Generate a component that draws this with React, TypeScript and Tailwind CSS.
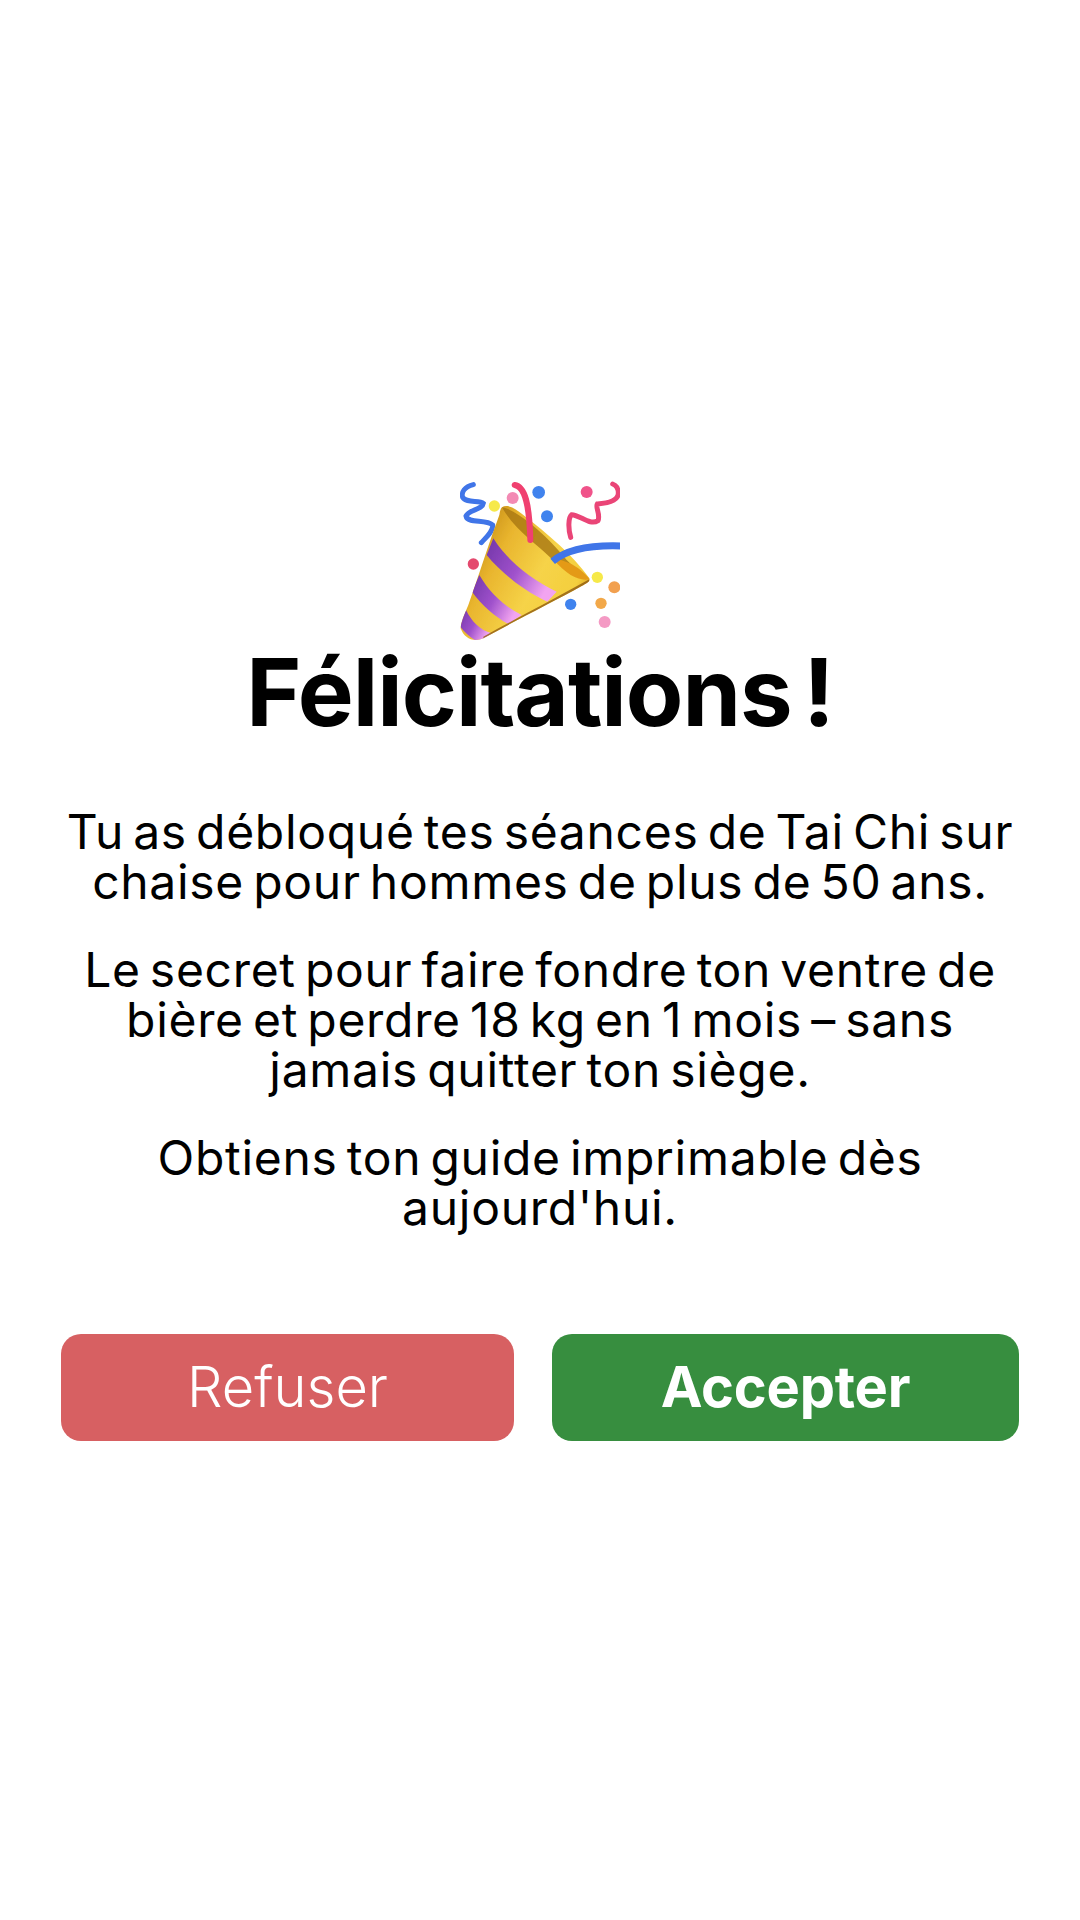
const PartyPopper = () => (
  <svg viewBox="60 60 480 480" className="w-[160px] h-[160px] shrink-0">
    <defs>
      <linearGradient id="cone" x1="0" y1="0.2" x2="1" y2="0.75">
        <stop offset="0" stopColor="#b9800f" />
        <stop offset="0.3" stopColor="#e9b52e" />
        <stop offset="0.6" stopColor="#f6d348" />
        <stop offset="0.85" stopColor="#f4cf3e" />
        <stop offset="1" stopColor="#c9860f" />
      </linearGradient>
      <linearGradient id="stripe" x1="0" y1="0" x2="1" y2="0.5">
        <stop offset="0" stopColor="#7235a8" />
        <stop offset="0.55" stopColor="#a052cc" />
        <stop offset="1" stopColor="#f2a4f0" />
      </linearGradient>
      <clipPath id="coneClip">
        <path d="M186 142 C200 132 222 142 250 165 C320 220 400 285 448 355 C452 364 440 370 425 378 C340 425 230 480 130 535 C100 548 72 535 62 505 C62 490 72 465 85 435 C115 350 150 240 178 165 C180 152 182 146 186 142 Z" />
      </clipPath>
      <filter id="soft" x="-5%" y="-5%" width="110%" height="110%">
        <feGaussianBlur stdDeviation="2" />
      </filter>
    </defs>

    <g filter="url(#soft)">
      <path d="M100 74 C75 80 62 96 68 112 C78 130 118 120 130 130 C128 148 85 150 78 168 C82 192 140 176 158 195 C160 215 135 235 124 248" fill="none" stroke="#3f74e8" strokeWidth="15" strokeLinecap="round" />

      <path d="M186 142 C200 132 222 142 250 165 C320 220 400 285 448 355 C452 364 440 370 425 378 C340 425 230 480 130 535 C100 548 72 535 62 505 C62 490 72 465 85 435 C115 350 150 240 178 165 C180 152 182 146 186 142 Z" fill="url(#cone)" />
      <g clipPath="url(#coneClip)">
        <path d="M160 235 C200 300 270 355 350 395 L322 425 C250 392 180 335 140 285 Z" fill="url(#stripe)" />
        <path d="M118 345 C150 400 195 440 245 465 L205 492 C165 470 125 435 96 395 Z" fill="url(#stripe)" />
        <path d="M78 450 C95 485 120 510 155 520 L120 548 C95 538 75 518 56 495 Z" fill="url(#stripe)" />
        <path d="M130 530 C230 475 340 418 448 358 L452 376 C340 438 230 492 130 550 Z" fill="#8f5a12" opacity="0.8" />
        <path d="M186 142 C235 150 330 235 380 300 C405 325 430 345 448 355 C415 342 360 322 330 292 C290 252 225 212 186 142 Z" fill="#a87712" opacity="0.8" />
        <path d="M340 298 C385 298 430 332 448 358 C420 364 382 348 340 298 Z" fill="#e49a18" />
      </g>

      <path d="M224 75 C255 80 268 130 271 240" fill="none" stroke="#f0406f" strokeWidth="18" strokeLinecap="round" />
      <path d="M338 304 C380 268 450 255 543 258" fill="none" stroke="#3f74e8" strokeWidth="21" />
      <path d="M392 232 C384 205 385 172 395 164 C420 165 450 198 474 182 C482 162 465 142 472 132 C500 130 535 125 535 100 C535 85 527 75 518 72" fill="none" stroke="#ea4577" strokeWidth="15" strokeLinecap="round" />

      <circle cx="163" cy="138" r="17" fill="#f6e94a" />
      <circle cx="218" cy="114" r="18" fill="#f38ab4" />
      <circle cx="296" cy="97" r="19" fill="#3f83ee" />
      <circle cx="321" cy="169" r="18" fill="#3f83ee" />
      <circle cx="440" cy="96" r="18" fill="#f0528a" />
      <circle cx="100" cy="312" r="17" fill="#e4496e" />
      <circle cx="472" cy="352" r="17" fill="#f6e94a" />
      <circle cx="523" cy="382" r="18" fill="#f2a050" />
      <circle cx="483" cy="430" r="17" fill="#f2a84a" />
      <circle cx="392" cy="433" r="17" fill="#3f83ee" />
      <circle cx="494" cy="486" r="18" fill="#f49ac4" />
    </g>
  </svg>
);

export default function App() {
  return (
    <div className="min-h-[1920px] bg-white flex flex-col items-center justify-center px-[61px] font-['Inter',sans-serif] text-black">
      <PartyPopper />
      <h1 className="text-[94px] leading-[100px] font-bold tracking-[-1px] [word-spacing:-10px] pt-[2px] mb-[65px]">Félicitations !</h1>
      <div className="flex flex-col gap-[38px] text-center text-[48px] leading-[50px] tracking-[0.7px] [word-spacing:-5px] font-[380]">
        <p>Tu as débloqué tes séances de Tai Chi sur<br />chaise pour hommes de plus de 50 ans.</p>
        <p>Le secret pour faire fondre ton ventre de<br />bière et perdre 18 kg en 1 mois – sans<br />jamais quitter ton siège.</p>
        <p>Obtiens ton guide imprimable dès<br />aujourd'hui.</p>
      </div>
      <div className="flex w-full gap-[38px] mt-[101px]">
        <button className="w-[453px] h-[107px] rounded-[20px] bg-[#d76062] text-white text-[56px] font-light">Refuser</button>
        <button className="w-[467px] h-[107px] rounded-[20px] bg-[#378e3f] text-white text-[56px] font-bold tracking-[-0.2px]">Accepter</button>
      </div>
    </div>
  );
}
